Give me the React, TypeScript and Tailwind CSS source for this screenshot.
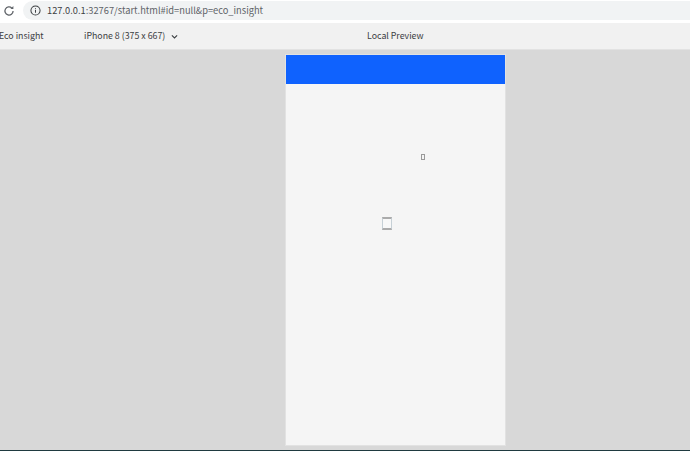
const App = () => {
  return (
    <div
      className="flex h-[451px] w-[690px] flex-col overflow-hidden bg-[#d8d8d8] text-[#3c4043]"
      style={{ fontFamily: '"Noto Sans CJK KR", "Noto Sans", sans-serif' }}
    >
      {/* browser bar */}
      <div className="flex h-[23px] shrink-0 items-start bg-white pl-[2px] pt-[1px]">
        <svg width="14" height="14" viewBox="0 0 24 24" fill="none" stroke="#5f6368" strokeWidth="2.2" className="mt-[3px] shrink-0">
          <path d="M19 12a7 7 0 1 1-2.1-5" />
          <path d="M19.5 3.5v5h-5" fill="#5f6368" stroke="none" />
        </svg>
        <div className="ml-[7px] flex h-[19px] flex-1 items-center rounded-l-full bg-[#f1f3f4] pl-[7px] text-[9.3px]">
          <svg width="11" height="11" viewBox="0 0 24 24" fill="none" stroke="#3c4043" strokeWidth="2.2" className="shrink-0">
            <circle cx="12" cy="12" r="10" />
            <path d="M12 11v6M12 7v2" />
          </svg>
          <span className="ml-[6px] whitespace-nowrap">
            127.0.0.1<span className="text-[#5f6368]">:32767/start.html#id=null&amp;p=eco_insight</span>
          </span>
        </div>
      </div>

      {/* preview toolbar */}
      <div className="relative flex h-[27px] shrink-0 items-center border-b border-[#e2e2e2] bg-[#f1f1f1] text-[8.8px]">
        <span className="ml-[-1px] w-[85px] whitespace-nowrap">Eco insight</span>
        <span className="whitespace-nowrap">iPhone 8 (375 x 667)</span>
        <svg width="9" height="9" viewBox="0 0 24 24" fill="none" stroke="#3c4043" strokeWidth="3" className="ml-[5px]">
          <path d="M5 9l7 7 7-7" />
        </svg>
        <span className="absolute left-[367px] whitespace-nowrap">Local Preview</span>
      </div>

      {/* device */}
      <div className="flex flex-1 pl-[285px] pt-[4px]">
        <div className="flex h-[392px] w-[221px] flex-col border border-[#e2e2e2] bg-[#f5f5f5]">
          <div className="h-[29px] shrink-0 bg-[#0f62fe]" />
          <div className="relative flex-1">
            <div className="absolute left-[135px] top-[70px] h-[6px] w-[4px] border border-[#9a9a9a] bg-[#f4f4f4]" />
            <div className="absolute left-[96px] top-[133px] h-[13px] w-[10px] border-x border-y-2 border-x-[#c6d0d6] border-y-[#ababab] bg-[#f8f8f8]" />
          </div>
        </div>
      </div>
      <div className="h-[1px] shrink-0 bg-[#1f3a40]" />
    </div>
  );
};

export default App;
